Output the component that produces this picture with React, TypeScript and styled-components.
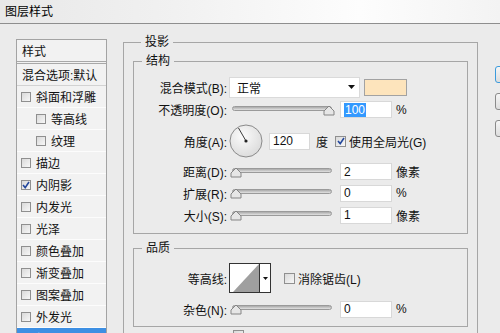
import styled, { createGlobalStyle } from "styled-components";

const GlobalStyle = createGlobalStyle`
  html, body {
    margin: 0;
    padding: 0;
  }
  body {
    width: 500px;
    height: 333px;
    overflow: hidden;
    background: #ebebeb;
    font-family: "Liberation Sans", "Noto Sans CJK SC", sans-serif;
    font-size: 12px;
    color: #111;
  }
`;

const Window = styled.div`
  width: 500px;
  height: 333px;
  display: flex;
  flex-direction: column;
  overflow: hidden;
`;

const TitleBar = styled.div`
  height: 24px;
  flex-shrink: 0;
  display: flex;
  align-items: center;
  padding: 0 0 3px 5px;
  box-sizing: border-box;
  border-bottom: 1px solid #8e8e8e;
  background: linear-gradient(to right, #e8e8e8 0%, #f1f1f1 35%, #fdfdfd 72%, #f3f3f3 100%);
  font-size: 12px;
  color: #000;
`;

const Body = styled.div`
  display: flex;
  align-items: flex-start;
  padding-left: 16px;
`;

/* ---- left list of styles ---- */

const StylePanel = styled.div`
  margin-top: 15px;
  width: 91px;
  flex-shrink: 0;
  box-sizing: border-box;
  border: 1px solid #a3a3a3;
  border-bottom: none;
  background: #f2f2f2;
`;

const PanelHeader = styled.div`
  height: 21px;
  display: flex;
  align-items: center;
  padding-left: 5px;
  border-bottom: 3px double #a8a8a8;
`;

const BlendRow = styled.div`
  height: 21px;
  display: flex;
  align-items: center;
  padding-left: 5px;
  border-bottom: 1px solid #d2d2d2;
`;

const StyleRow = styled.div<{ $indent?: boolean; $selected?: boolean }>`
  height: 21px;
  display: flex;
  align-items: center;
  gap: 5px;
  padding-left: ${({ $indent }) => ($indent ? 19 : 4)}px;
  border-bottom: 1px solid #fcfcfc;
  background: ${({ $selected }) => ($selected ? "#3d8fe3" : "transparent")};
  color: ${({ $selected }) => ($selected ? "#fff" : "#111")};
  white-space: nowrap;
`;

const Check = styled.span<{ $size: number }>`
  display: inline-flex;
  align-items: center;
  justify-content: center;
  flex-shrink: 0;
  width: ${({ $size }) => $size}px;
  height: ${({ $size }) => $size}px;
  box-sizing: border-box;
  border: 1px solid #8f8f8f;
  background: linear-gradient(135deg, #d9d9d9, #f7f7f7);
`;

/* ---- group boxes ---- */

const Group = styled.fieldset<{ $outer?: boolean }>`
  margin: ${({ $outer }) => ($outer ? "10px 0 0 16px" : "0")};
  width: ${({ $outer }) => ($outer ? "355px" : "335px")};
  flex-shrink: 0;
  box-sizing: border-box;
  min-width: 0;
  padding: ${({ $outer }) => ($outer ? "3px 9px 0" : "7px 0 7px")};
  border: 1px solid #a6a6a6;
`;

const Legend = styled.legend`
  margin-left: 8px;
  padding: 0 4px;
  font-size: 12px;
  line-height: 16px;
`;

const Stack = styled.div`
  display: flex;
  flex-direction: column;
  gap: 6px;
`;

const Row = styled.div<{ $h: number }>`
  height: ${({ $h }) => $h}px;
  display: flex;
  align-items: center;
  white-space: nowrap;
`;

const Label = styled.span`
  width: 93px;
  flex-shrink: 0;
  text-align: right;
`;

const Select = styled.div`
  margin-left: 2px;
  width: 131px;
  height: 21px;
  box-sizing: border-box;
  display: flex;
  align-items: center;
  justify-content: space-between;
  padding: 0 4px 0 7px;
  background: #fff;
  border: 1px solid #dadada;
`;

const Swatch = styled.div`
  margin-left: 4px;
  width: 43px;
  height: 17px;
  box-sizing: border-box;
  border: 1px solid #a2a2a2;
  background: #fde4bc;
`;

const Slider = styled.div`
  position: relative;
  margin-left: 5px;
  width: 100px;
  height: 12px;
  flex-shrink: 0;
`;

const Track = styled.div`
  position: absolute;
  left: 0;
  right: 0;
  top: 2px;
  height: 5px;
  box-sizing: border-box;
  border: 1px solid #9a9a9a;
  border-radius: 3px;
  background: linear-gradient(#a9a9a9, #e2e2e2);
`;

const Thumb = styled.svg<{ $left: number }>`
  position: absolute;
  top: 0;
  left: ${({ $left }) => $left}px;
`;

const NumberField = styled.div<{ $w: number; $ml: number }>`
  margin-left: ${({ $ml }) => $ml}px;
  width: ${({ $w }) => $w}px;
  height: 17px;
  flex-shrink: 0;
  box-sizing: border-box;
  display: flex;
  align-items: center;
  padding-left: 3px;
  background: #fff;
  border: 1px solid #d8d8d8;
`;

const Selected = styled.span`
  background: #3399ff;
  color: #fff;
  padding: 0 1px;
`;

const Unit = styled.span<{ $ml?: number }>`
  margin-left: ${({ $ml }) => $ml ?? 4}px;
`;

const Dial = styled.svg`
  margin-left: 2px;
  flex-shrink: 0;
`;

const CheckLabel = styled.span<{ $ml: number }>`
  margin-left: ${({ $ml }) => $ml}px;
  display: inline-flex;
  align-items: center;
  gap: 3px;
`;

const ContourBox = styled.div`
  margin-left: 2px;
  width: 42px;
  height: 30px;
  box-sizing: border-box;
  display: flex;
  border: 1px solid #333;
  background: #fff;
`;

const ContourPreview = styled.div`
  width: 29px;
  height: 28px;
`;

const ContourArrow = styled.div`
  width: 11px;
  box-sizing: border-box;
  border-left: 1px solid #333;
  display: flex;
  align-items: center;
  justify-content: center;
`;

const QualityWrap = styled.div`
  margin-top: 6px;
`;

const ExtraRow = styled.div`
  margin-top: 3px;
  padding-left: 100px;
  display: flex;
`;

/* ---- right buttons ---- */

const ButtonColumn = styled.div`
  margin: 42px 0 0 17px;
  display: flex;
  flex-direction: column;
  gap: 10px;
`;

const Button = styled.div<{ $primary?: boolean }>`
  width: 110px;
  height: 17px;
  box-sizing: border-box;
  border: 1px solid ${({ $primary }) => ($primary ? "#3c9bdc" : "#8a8a8a")};
  border-radius: 3px;
  background: linear-gradient(#f6f6f6, #dddddd);
  display: flex;
  align-items: center;
  justify-content: center;
  white-space: nowrap;
`;

const styles = [
  { name: "斜面和浮雕" },
  { name: "等高线", indent: true },
  { name: "纹理", indent: true },
  { name: "描边" },
  { name: "内阴影", checked: true },
  { name: "内发光" },
  { name: "光泽" },
  { name: "颜色叠加" },
  { name: "渐变叠加" },
  { name: "图案叠加" },
  { name: "外发光" },
  { name: "投影", checked: true, selected: true },
];

function Tick() {
  return (
    <svg width="8" height="8" viewBox="0 0 8 8">
      <path d="M1 4 L3.2 6.6 L7 1" fill="none" stroke="#23479c" strokeWidth="1.6" />
    </svg>
  );
}

function Box({ size = 10, checked = false }: { size?: number; checked?: boolean }) {
  return <Check $size={size}>{checked && <Tick />}</Check>;
}

function SliderControl({ at }: { at: number }) {
  return (
    <Slider>
      <Track />
      <Thumb $left={at} width="12" height="12" viewBox="0 0 12 12">
        <path d="M1 11 L1 7 L6 2 L11 7 L11 11 Z" fill="#e6e6e6" stroke="#858585" />
      </Thumb>
    </Slider>
  );
}

export default function App() {
  return (
    <>
      <GlobalStyle />
      <Window>
        <TitleBar>图层样式</TitleBar>
        <Body>
          <StylePanel>
            <PanelHeader>样式</PanelHeader>
            <BlendRow>混合选项:默认</BlendRow>
            {styles.map((s) => (
              <StyleRow key={s.name} $indent={s.indent} $selected={s.selected}>
                <Box checked={s.checked} />
                {s.name}
              </StyleRow>
            ))}
          </StylePanel>

          <Group $outer>
            <Legend>投影</Legend>
            <Group>
              <Legend>结构</Legend>
              <Row $h={22}>
                <Label>混合模式(B):</Label>
                <Select>
                  正常
                  <svg width="7" height="4" viewBox="0 0 7 4">
                    <path d="M0 0 H7 L3.5 4 Z" fill="#111" />
                  </svg>
                </Select>
                <Swatch />
              </Row>
              <Row $h={23}>
                <Label>不透明度(O):</Label>
                <SliderControl at={91} />
                <NumberField $w={52} $ml={8}>
                  <Selected>100</Selected>
                </NumberField>
                <Unit>%</Unit>
              </Row>
              <Row $h={40}>
                <Label>角度(A):</Label>
                <Dial width="34" height="34" viewBox="0 0 34 34">
                  <defs>
                    <radialGradient id="dialFill" cx="40%" cy="35%" r="75%">
                      <stop offset="0" stopColor="#fbfbfb" />
                      <stop offset="1" stopColor="#d8d8d8" />
                    </radialGradient>
                  </defs>
                  <circle cx="17" cy="17" r="16" fill="url(#dialFill)" stroke="#8a8a8a" />
                  <line x1="17" y1="17" x2="9.5" y2="4" stroke="#3a3a3a" strokeWidth="1" />
                  <circle cx="17" cy="17" r="1.6" fill="#222" />
                </Dial>
                <NumberField $w={41} $ml={6}>120</NumberField>
                <Unit $ml={6}>度</Unit>
                <CheckLabel $ml={7}>
                  <Box size={11} checked />
                  使用全局光(G)
                </CheckLabel>
              </Row>
              <Row $h={21}>
                <Label>距离(D):</Label>
                <SliderControl at={-2} />
                <NumberField $w={52} $ml={8}>2</NumberField>
                <Unit>像素</Unit>
              </Row>
              <Row $h={22}>
                <Label>扩展(R):</Label>
                <SliderControl at={-2} />
                <NumberField $w={52} $ml={8}>0</NumberField>
                <Unit>%</Unit>
              </Row>
              <Row $h={22}>
                <Label>大小(S):</Label>
                <SliderControl at={-2} />
                <NumberField $w={52} $ml={8}>1</NumberField>
                <Unit>像素</Unit>
              </Row>
            </Group>

            <QualityWrap>
              <Group>
                <Legend>品质</Legend>
                <Stack>
                  <Row $h={30}>
                    <Label>等高线:</Label>
                    <ContourBox>
                      <ContourPreview>
                        <svg width="29" height="28" viewBox="0 0 29 28">
                          <polygon points="3,28 29,0 29,28" fill="#9f9f9f" />
                        </svg>
                      </ContourPreview>
                      <ContourArrow>
                        <svg width="5" height="3" viewBox="0 0 5 3">
                          <path d="M0 0 H5 L2.5 3 Z" fill="#111" />
                        </svg>
                      </ContourArrow>
                    </ContourBox>
                    <CheckLabel $ml={13}>
                      <Box size={11} />
                      消除锯齿(L)
                    </CheckLabel>
                  </Row>
                  <Row $h={20}>
                    <Label>杂色(N):</Label>
                    <SliderControl at={-2} />
                    <NumberField $w={52} $ml={8}>0</NumberField>
                    <Unit>%</Unit>
                  </Row>
                </Stack>
              </Group>
            </QualityWrap>

            <ExtraRow>
              <Box size={11} />
            </ExtraRow>
          </Group>

          <ButtonColumn>
            <Button $primary>确定</Button>
            <Button>取消</Button>
            <Button>新建样式(W)...</Button>
          </ButtonColumn>
        </Body>
      </Window>
    </>
  );
}
